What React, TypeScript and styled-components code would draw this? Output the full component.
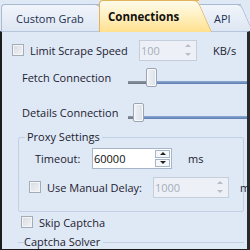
import React from "react";
import styled, { createGlobalStyle } from "styled-components";

const Global = createGlobalStyle`
  html, body { margin: 0; padding: 0; background: #dfe8f5; }
  * { box-sizing: border-box; }
`;

const Frame = styled.div`
  width: 250px;
  height: 250px;
  overflow: hidden;
  background: #dfe8f5;
  font-family: "Open Sans", "Noto Sans", sans-serif;
  font-size: 11px;
  color: #1c2230;
  display: flex;
  flex-direction: column;
`;

const TabStrip = styled.div`
  position: relative;
  z-index: 2;
  height: 31px;
  flex: none;
  background: #dfe8f5;
`;

const tabFill = (active?: boolean) =>
  active
    ? "linear-gradient(#fffbea 0%, #fff1c4 45%, #ffe08e 100%)"
    : "linear-gradient(#f1f5fb 0%, #dde6f2 100%)";
const tabLine = (active?: boolean) => (active ? "#e2b45a" : "#a9b9d1");

const Tab = styled.div<{ $left: number; $width: number; $pad: number; $active?: boolean; $z: number }>`
  position: absolute;
  left: ${(p) => p.$left}px;
  top: ${(p) => (p.$active ? 0 : 4)}px;
  width: ${(p) => p.$width}px;
  height: ${(p) => (p.$active ? 32 : 27)}px;
  z-index: ${(p) => p.$z};
  display: flex;
  align-items: center;
  padding-left: ${(p) => p.$pad}px;
  padding-top: ${(p) => (p.$active ? 0 : 1)}px;
  font-weight: ${(p) => (p.$active ? 700 : 400)};
  font-size: ${(p) => (p.$active ? 11.5 : 11)}px;
  color: ${(p) => (p.$active ? "#101010" : "#1d3050")};
  &::before {
    content: "";
    position: absolute;
    inset: 0 10px 0 0;
    border: 1px solid ${(p) => tabLine(p.$active)};
    border-bottom: none;
    border-right: none;
    border-top-left-radius: 4px;
    background: ${(p) => tabFill(p.$active)};
    z-index: -1;
  }
  &::after {
    content: "";
    position: absolute;
    top: 0;
    bottom: 0;
    right: 4px;
    width: 16px;
    transform: skewX(24deg);
    border-top: 1px solid ${(p) => tabLine(p.$active)};
    border-right: 1px solid ${(p) => tabLine(p.$active)};
    border-top-right-radius: 5px;
    background: ${(p) => tabFill(p.$active)};
    z-index: -1;
  }
`;

const TabLabel = styled.span`
  position: relative;
  z-index: 2;
`;

const Page = styled.div`
  position: relative;
  z-index: 1;
  flex: 1;
  border-top: 1px solid #b4c5dc;
  border-left: 2px solid #1c1c1c;
  border-right: 3px solid #2a2a2a;
  border-bottom: 3px solid #1c1c1c;
  padding: 8px 0 0 10px;
  display: flex;
  flex-direction: column;
`;

const Row = styled.div<{ $h: number; $indent?: number; $top?: number }>`
  height: ${(p) => p.$h}px;
  margin-top: ${(p) => p.$top ?? 0}px;
  display: flex;
  align-items: center;
  padding-left: ${(p) => p.$indent ?? 0}px;
  flex: none;
  white-space: nowrap;
`;

const SliderRow = styled.div<{ $h: number }>`
  height: ${(p) => p.$h}px;
  display: flex;
  align-items: center;
  padding-left: 10px;
  flex: none;
  white-space: nowrap;
`;

const Check = styled.span`
  width: 12px;
  height: 12px;
  flex: none;
  border: 1px solid #a4acb8;
  background: linear-gradient(135deg, #d6dae0, #f3f4f6);
  box-shadow: inset 0 0 0 1px #f4f5f7;
  margin-right: 6px;
`;

const Label = styled.span<{ $w?: number; $gap?: number }>`
  display: inline-block;
  width: ${(p) => (p.$w ? `${p.$w}px` : "auto")};
  margin-left: ${(p) => p.$gap ?? 0}px;
  flex: none;
`;

const Spin = styled.div<{ $w: number; $disabled?: boolean }>`
  width: ${(p) => p.$w}px;
  height: 21px;
  flex: none;
  display: flex;
  border: 1px solid ${(p) => (p.$disabled ? "#c5cedb" : "#a7b5ca")};
  background: ${(p) => (p.$disabled ? "#edf1f7" : "#ffffff")};
  color: ${(p) => (p.$disabled ? "#a6aeba" : "#101010")};
  align-items: center;
  padding-left: 1px;
`;

const SpinText = styled.span`
  flex: 1;
`;

const SpinButtons = styled.div`
  width: 16px;
  align-self: stretch;
  display: flex;
  flex-direction: column;
  padding: 1px 1px 1px 0;
  gap: 1px;
`;

const SpinBtn = styled.div<{ $framed?: boolean }>`
  flex: 1;
  display: flex;
  align-items: center;
  justify-content: center;
  border: 1px solid ${(p) => (p.$framed ? "#a7b5ca" : "transparent")};
  background: ${(p) => (p.$framed ? "#f5f7fa" : "transparent")};
`;

const Arrow = styled.span<{ $up?: boolean; $disabled?: boolean }>`
  width: 0;
  height: 0;
  border-left: 3px solid transparent;
  border-right: 3px solid transparent;
  ${(p) =>
    p.$up
      ? `border-bottom: 3px solid ${p.$disabled ? "#b6bec9" : "#202020"};`
      : `border-top: 3px solid ${p.$disabled ? "#b6bec9" : "#202020"};`}
`;

const SliderWrap = styled.div`
  position: relative;
  flex: 1;
  align-self: stretch;
`;

const Track = styled.div<{ $top: number }>`
  position: absolute;
  right: 0;
  top: ${(p) => p.$top}px;
  height: 3px;
  background: linear-gradient(#8fa9d2, #5b7db3);
`;

const TrackFill = styled.div<{ $top: number }>`
  position: absolute;
  left: 0;
  top: ${(p) => p.$top}px;
  height: 3px;
  background: linear-gradient(#8e98a4, #6a7685);
`;

const Thumb = styled.div<{ $top: number }>`
  position: absolute;
  top: ${(p) => p.$top}px;
  width: 11px;
  height: 19px;
  border: 1px solid #9ba5b3;
  border-radius: 2px;
  background: linear-gradient(90deg, #eff2f6, #dce2ea);
  box-shadow: inset 0 0 0 1px #f8f9fb;
`;

const Group = styled.fieldset`
  margin: 0 3px 0 6px;
  padding: 0 0 13px 6px;
  border: 1px solid #c2d0e3;
  border-radius: 2px;
  flex: none;
  min-width: 0;
`;

const Legend = styled.legend`
  padding: 0 2px;
  font-size: 11px;
  line-height: 14px;
`;

const SubGroup = styled.fieldset`
  margin: 3px 3px 0 6px;
  padding: 0;
  border: none;
  border-top: 1px solid #c2d0e3;
  flex: none;
  min-width: 0;
`;

const SubLegend = styled.legend`
  padding: 0 3px 0 0;
  margin-left: 6px;
  font-size: 11px;
  line-height: 14px;
`;

function Slider({ pos, thumbTop }: { pos: number; thumbTop: number }) {
  const trackTop = thumbTop + 13;
  return (
    <SliderWrap>
      <TrackFill $top={trackTop} style={{ width: pos }} />
      <Track $top={trackTop} style={{ left: pos }} />
      <Thumb $top={thumbTop} style={{ left: pos }} />
    </SliderWrap>
  );
}

function SpinBox({ value, width, disabled }: { value: string; width: number; disabled?: boolean }) {
  return (
    <Spin $w={width} $disabled={disabled}>
      <SpinText>{value}</SpinText>
      <SpinButtons>
        <SpinBtn $framed={!disabled}>
          <Arrow $up $disabled={disabled} />
        </SpinBtn>
        <SpinBtn $framed={!disabled}>
          <Arrow $disabled={disabled} />
        </SpinBtn>
      </SpinButtons>
    </Spin>
  );
}

export default function App() {
  return (
    <Frame>
      <Global />
      <TabStrip>
        <Tab $left={1} $width={108} $pad={15} $z={1}>
          <TabLabel>Custom Grab</TabLabel>
        </Tab>
        <Tab $left={196} $width={55} $pad={18} $z={1}>
          <TabLabel>API</TabLabel>
        </Tab>
        <Tab $left={99} $width={110} $pad={9} $active $z={3}>
          <TabLabel>Connections</TabLabel>
        </Tab>
      </TabStrip>
      <Page>
        <Row $h={20} $indent={0}>
          <Check />
          <Label $w={109}>Limit Scrape Speed</Label>
          <SpinBox value="100" width={58} disabled />
          <Label $gap={16}>KB/s</Label>
        </Row>
        <SliderRow $h={34}>
          <Label $w={106}>Fetch Connection</Label>
          <Slider pos={18} thumbTop={8} />
        </SliderRow>
        <SliderRow $h={36}>
          <Label $w={106}>Details Connection</Label>
          <Slider pos={5} thumbTop={9} />
        </SliderRow>
        <Group>
          <Legend>Proxy Settings</Legend>
          <Row $h={22} $indent={10} $top={3}>
            <Label $w={57}>Timeout:</Label>
            <SpinBox value="60000" width={80} />
            <Label $gap={16}>ms</Label>
          </Row>
          <Row $h={22} $indent={4} $top={7}>
            <Check />
            <Label $w={106}>Use Manual Delay:</Label>
            <SpinBox value="1000" width={76} disabled />
            <Label $gap={11}>ms</Label>
          </Row>
        </Group>
        <Row $h={20} $indent={9}>
          <Check />
          <Label>Skip Captcha</Label>
        </Row>
        <SubGroup>
          <SubLegend>Captcha Solver</SubLegend>
        </SubGroup>
      </Page>
    </Frame>
  );
}
